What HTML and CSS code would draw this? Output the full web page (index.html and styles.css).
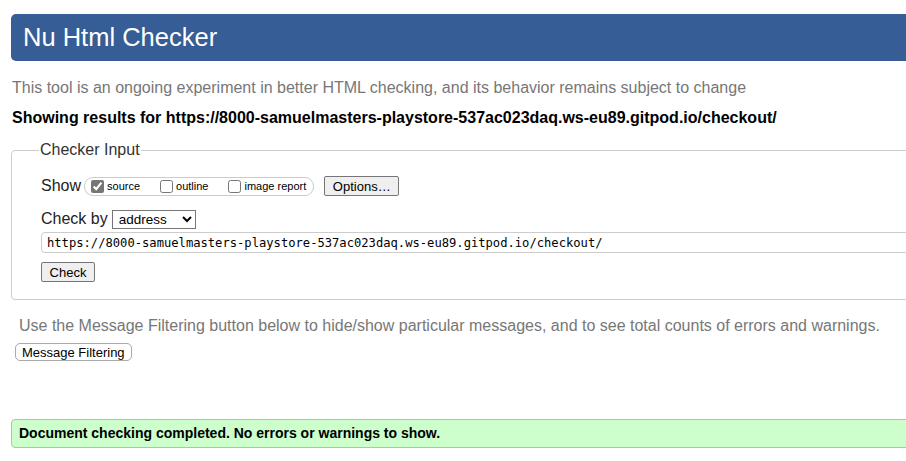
FILE: index.html
```html
<!DOCTYPE html>
<html>
<head>
<meta charset="utf-8">
<title>Nu Html Checker</title>
<link rel="stylesheet" href="styles.css">
</head>
<body>
<div class="page">
  <h1 class="banner">Nu Html Checker</h1>
  <p class="intro">This tool is an ongoing experiment in better HTML checking, and its behavior remains subject to change</p>
  <p class="results">Showing results for https://8000-samuelmasters-playstore-537ac023daq.ws-eu89.gitpod.io/checkout/</p>
  <fieldset class="input">
    <legend class="legend">Checker Input</legend>
    <div class="row">
      <span class="label">Show</span>
      <span class="group">
        <label class="opt"><input type="checkbox" checked>source</label>
        <label class="opt"><input type="checkbox">outline</label>
        <label class="opt"><input type="checkbox">image report</label>
      </span>
      <button class="btn options">Options…</button>
    </div>
    <div class="row">
      <span class="label">Check by</span>
      <select class="select"><option>address</option></select>
    </div>
    <input class="url" type="text" value="https://8000-samuelmasters-playstore-537ac023daq.ws-eu89.gitpod.io/checkout/">
    <div class="row">
      <button class="btn check">Check</button>
    </div>
  </fieldset>
  <p class="filter-note">Use the Message Filtering button below to hide/show particular messages, and to see total counts of errors and warnings.</p>
  <button class="btn filtering">Message Filtering</button>
  <p class="success">Document checking completed. No errors or warnings to show.</p>
</div>
</body>
</html>
```
FILE: styles.css
```css
html, body {
  margin: 0;
  padding: 0;
  overflow: hidden;
  background: #fff;
}
body {
  font-family: "Liberation Sans", Arial, sans-serif;
  color: #000;
}
.page {
  width: 1100px;
  padding: 14px 0 0 11px;
  display: flex;
  flex-direction: column;
  align-items: flex-start;
}
.banner {
  margin: 0;
  box-sizing: border-box;
  width: 100%;
  height: 47px;
  background: #365d95;
  color: #fff;
  font-weight: normal;
  font-size: 25.5px;
  line-height: 47px;
  padding-left: 12px;
  border-radius: 5px 0 0 5px;
}
.intro {
  margin: 17px 0 0 1px;
  font-size: 16px;
  line-height: 20px;
  color: #777;
}
.results {
  margin: 10px 0 0 1px;
  font-size: 16px;
  font-weight: bold;
  line-height: 20px;
}
.input {
  box-sizing: border-box;
  width: 100%;
  margin: 12px 0 0 0;
  padding: 16px 0 17px 29px;
  border: 1px solid #ccc;
  border-radius: 4px;
  display: flex;
  flex-direction: column;
  align-items: flex-start;
}
.legend {
  font-size: 16px;
  color: #333;
  padding: 0 1px;
  margin-left: -2px;
  line-height: 20px;
}
.row {
  display: flex;
  align-items: center;
}
.label {
  font-size: 16px;
  line-height: 20px;
  color: #222;
}
.group {
  margin-left: 3px;
  display: flex;
  align-items: center;
  gap: 20px;
  height: 17px;
  border: 1px solid #ccc;
  border-radius: 9px;
  padding: 0 7px 0 6px;
}
.opt {
  display: flex;
  align-items: center;
  font-size: 11px;
  color: #000;
}
.opt input {
  width: 13px;
  height: 13px;
  margin: 0 3px 0 0;
  accent-color: #767676;
}
.btn {
  font-family: "Liberation Sans", Arial, sans-serif;
  background: #efefef;
  border: 1px solid #767676;
  border-radius: 2px;
  color: #000;
  padding: 0 6px;
}
.options {
  margin-left: 10px;
  height: 20px;
  font-size: 13px;
  width: 75px;
}
.row:nth-of-type(2) {
  margin-top: 13px;
}
.select {
  margin-left: 4px;
  font-family: "Liberation Sans", Arial, sans-serif;
  font-size: 13.5px;
  width: 84px;
  height: 19px;
  border: 1px solid #767676;
  border-radius: 0;
  background: #fff;
  padding: 0 2px;
}
.url {
  margin-top: 3px;
  box-sizing: border-box;
  width: 100%;
  height: 21px;
  border: 1px solid #ccc;
  border-radius: 4px 0 0 4px;
  font-family: "DejaVu Sans Mono", monospace;
  font-size: 12.15px;
  color: #000;
  padding: 0 5px;
}
.check {
  margin-top: 9px;
  height: 20px;
  width: 54px;
  font-size: 13px;
}
.filter-note {
  margin: 16px 0 0 8px;
  font-size: 16px;
  line-height: 20px;
  color: #777;
}
.filtering {
  margin-top: 7px;
  margin-left: 4px;
  height: 18px;
  font-size: 13px;
  border: 1px solid #aaa;
  border-radius: 5px;
  background: #fff;
  padding: 0 6px;
}
.success {
  box-sizing: border-box;
  width: 100%;
  margin: 58px 0 0 0;
  height: 29px;
  line-height: 27px;
  background: #ccffcc;
  border: 1px solid #bbb;
  border-radius: 4px 0 0 4px;
  padding-left: 7px;
  font-size: 14px;
  font-weight: bold;
}
```
